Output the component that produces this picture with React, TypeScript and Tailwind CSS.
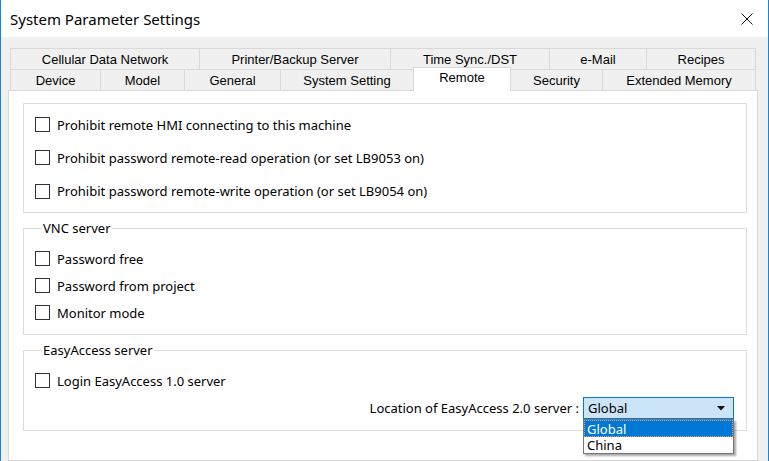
import React from "react";

const ui = { fontFamily: '"Noto Sans", "Open Sans", sans-serif' };
const tabFont = { fontFamily: '"Liberation Sans", Arial, sans-serif' };

function Check({ label, h }: { label: string; h: string }) {
  return (
    <div className={`flex items-center gap-[7px] ${h}`}>
      <div className="w-[15px] h-[15px] border border-[#333333] bg-white shrink-0" />
      <span className="text-[13px] leading-[16px] text-black whitespace-nowrap">{label}</span>
    </div>
  );
}

type Tab = { label: string; w: string; last?: boolean };

const row1: Tab[] = [
  { label: "Cellular Data Network", w: "w-[189px]" },
  { label: "Printer/Backup Server", w: "w-[191px]" },
  { label: "Time Sync./DST", w: "w-[159px]" },
  { label: "e-Mail", w: "w-[97px]" },
  { label: "Recipes", w: "w-[110px]", last: true },
];

export default function App() {
  return (
    <div
      className="w-[769px] h-[461px] overflow-hidden bg-[#f0f0f0] border-l border-r border-[#1883d7] flex flex-col"
      style={ui}
    >
      {/* Title bar */}
      <div className="h-[37px] bg-white flex items-center justify-between pl-[9px] pr-[15px] shrink-0">
        <span className="text-[15px] leading-[20px] text-black">System Parameter Settings</span>
        <svg width="12" height="12" viewBox="0 0 12 12">
          <path d="M0.5 0.5 L11.5 11.5 M11.5 0.5 L0.5 11.5" stroke="#111" strokeWidth="1" fill="none" />
        </svg>
      </div>

      {/* Body */}
      <div className="flex-1 pt-[11px] flex flex-col">
        {/* Tab row 1 */}
        <div className="flex ml-[9px] h-[21px] text-[13px] text-black" style={tabFont}>
          {row1.map((t) => (
            <div
              key={t.label}
              className={`${t.w} h-[21px] border-t border-l ${t.last ? "border-r" : ""} border-[#d9d9d9] bg-[#f0f0f0] flex items-center justify-center leading-[16px] pt-[1px]`}
            >
              {t.label}
            </div>
          ))}
        </div>
        {/* Tab row 2 */}
        <div className="flex items-end ml-[9px] h-[21px] text-[13px] text-black relative z-10" style={tabFont}>
          <div className="w-[90px] h-[21px] border-t border-l border-[#d9d9d9] flex justify-center pt-[3px] leading-[16px]">Device</div>
          <div className="w-[84px] h-[21px] border-t border-l border-[#d9d9d9] flex justify-center pt-[3px] leading-[16px]">Model</div>
          <div className="w-[96px] h-[21px] border-t border-l border-[#d9d9d9] flex justify-center pt-[3px] leading-[16px]">General</div>
          <div className="w-[133px] h-[21px] border-t border-l border-[#d9d9d9] flex justify-center pt-[3px] leading-[16px]">System Setting</div>
          <div className="w-[98px] h-[24px] -mb-[1px] border-t border-l border-r border-[#d9d9d9] bg-white flex justify-center pt-[2px] leading-[16px]">Remote</div>
          <div className="w-[91px] h-[21px] border-t border-[#d9d9d9] flex justify-center pt-[3px] leading-[16px]">Security</div>
          <div className="w-[154px] h-[21px] border-t border-l border-r border-[#d9d9d9] flex justify-center pt-[3px] leading-[16px]">Extended Memory</div>
        </div>

        {/* Panel */}
        <div className="ml-[7px] w-[750px] flex-1 bg-white border border-[#d9d9d9] pt-[12px] pl-[14px] pr-[10px]">
          {/* Group 1 */}
          <div className="border border-[#dcdcdc] pt-[4px] pb-[4px] pl-[11px]">
            <Check label="Prohibit remote HMI connecting to this machine" h="h-[33px]" />
            <Check label="Prohibit password remote-read operation (or set LB9053 on)" h="h-[33px]" />
            <Check label="Prohibit password remote-write operation (or set LB9054 on)" h="h-[34px]" />
          </div>

          {/* Group 2 */}
          <fieldset className="mt-[7px] border border-[#dcdcdc] pl-[11px] pb-[8px]">
            <legend className="ml-[7px] px-[1px] text-[13px] leading-[16px] text-black">VNC server</legend>
            <div className="pt-[9px]">
              <Check label="Password free" h="h-[27px]" />
              <Check label="Password from project" h="h-[27px]" />
              <Check label="Monitor mode" h="h-[27px]" />
            </div>
          </fieldset>

          {/* Group 3 */}
          <fieldset className="mt-[7px] border border-[#dcdcdc] pl-[11px] pr-[12px] pb-[11px]">
            <legend className="ml-[7px] px-[1px] text-[13px] leading-[16px] text-black">EasyAccess server</legend>
            <div className="pt-[9px]">
              <Check label="Login EasyAccess 1.0 server" h="h-[27px]" />
            </div>
            <div className="mt-[3px] flex justify-end items-center gap-[4px]">
              <span className="text-[13px] leading-[16px] text-black whitespace-nowrap">Location of EasyAccess 2.0 server :</span>
              <div className="relative w-[151px] h-[22px]">
                <div className="w-full h-full bg-[#cce4f7] border border-[#0078d7] flex items-center justify-between pl-[4px] pr-[8px]">
                  <span className="text-[13px] leading-[16px] text-black">Global</span>
                  <svg width="8" height="5" viewBox="0 0 8 5">
                    <path d="M0 0 H8 L4 4.5 Z" fill="#111" />
                  </svg>
                </div>
                <div className="absolute left-0 top-[22px] w-[151px] bg-white border border-[#767676] shadow-[2px_2px_2px_rgba(0,0,0,0.35)] z-20">
                  <div className="h-[17px] bg-[#0078d7] outline outline-1 outline-dotted outline-[#e8a060] -outline-offset-1 flex items-center pl-[3px]">
                    <span className="text-[13px] leading-[16px] text-white">Global</span>
                  </div>
                  <div className="h-[16px] flex items-center pl-[3px]">
                    <span className="text-[13px] leading-[16px] text-black">China</span>
                  </div>
                </div>
              </div>
            </div>
          </fieldset>
        </div>
      </div>
    </div>
  );
}
